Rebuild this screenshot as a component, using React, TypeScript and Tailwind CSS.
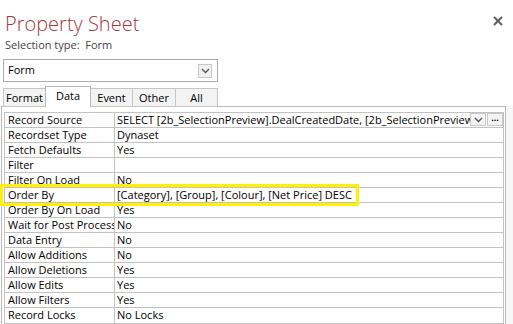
import React from 'react'

// Property Sheet pane (Access), Data tab
const rows: [string, string][] = [
  ['Record Source', 'SELECT [2b_SelectionPreview].DealCreatedDate, [2b_SelectionPreview].Category, [2b_SelectionPreview].Group'],
  ['Recordset Type', 'Dynaset'],
  ['Fetch Defaults', 'Yes'],
  ['Filter', ''],
  ['Filter On Load', 'No'],
  ['Order By', '[Category], [Group], [Colour], [Net Price] DESC'],
  ['Order By On Load', 'Yes'],
  ['Wait for Post Processing', 'No'],
  ['Data Entry', 'No'],
  ['Allow Additions', 'No'],
  ['Allow Deletions', 'Yes'],
  ['Allow Edits', 'Yes'],
  ['Allow Filters', 'Yes'],
  ['Record Locks', 'No Locks'],
]

const tabs = ['Format', 'Data', 'Event', 'Other', 'All']
const tabWidths = ['w-[42px]', 'w-[46px]', 'w-[42px]', 'w-[43px]', 'w-[42px]']

function Chevron() {
  return (
    <svg width="9" height="6" viewBox="0 0 9 6">
      <path d="M1 1 L4.5 4.5 L8 1" fill="none" stroke="#555" strokeWidth="1.4" />
    </svg>
  )
}

export default function App() {
  return (
    <div className="relative h-[324px] w-[513px] overflow-hidden bg-white font-['Open_Sans',sans-serif] text-[11px] text-black">
      {/* Titre + fermer */}
      <div className="flex items-start justify-between pt-[10px] pl-[5px] pr-[10px]">
        <h1 className="text-[20px] font-light leading-[28px] text-[#a4373a]">Property Sheet</h1>
        <svg width="10" height="10" viewBox="0 0 10 10" className="mt-[6px]">
          <path d="M1 1 L9 9 M9 1 L1 9" stroke="#5f5f5f" strokeWidth="2" />
        </svg>
      </div>
      <div className="pl-[5px] leading-[14px] text-[#444]">Selection type:&nbsp; Form</div>

      {/* Sélecteur d'objet */}
      <div className="ml-[3px] mt-[7px] flex h-[23px] w-[215px] items-center justify-between border border-[#ababab] pl-[4px] pr-[5px]">
        <span>Form</span>
        <span className="flex h-[14px] w-[14px] items-center justify-center border border-[#c8c8c8] bg-[#f0f0f0]">
          <Chevron />
        </span>
      </div>

      {/* Onglets */}
      <div className="relative z-10 -mb-px ml-[3px] mt-[4px] flex h-[21px] items-end">
        {tabs.map((t, i) =>
          t === 'Data' ? (
            <div
              key={t}
              className={`${tabWidths[i]} flex h-[21px] justify-center whitespace-nowrap border-x border-t border-[#b9b9b9] bg-white pt-[2px] leading-[14px]`}
            >
              {t}
            </div>
          ) : (
            <div
              key={t}
              className={`${tabWidths[i]} flex h-[19px] justify-center whitespace-nowrap border border-[#c6c6c6] bg-[#f3f3f3] pt-[2px] leading-[14px] ${i > 1 ? 'border-l-0' : ''} ${i === 0 ? 'border-r-0' : ''}`}
            >
              {t}
            </div>
          )
        )}
      </div>

      {/* Panneau + grille */}
      <div className="flex">
        <div className="ml-px w-[505px] border-x border-t border-[#b9b9b9] pl-[2px] pr-px pt-[5px]">
          <div className="border border-[#c2c2c2]">
            {rows.map(([k, v], i) => (
              <div key={k} className={`flex h-[15px] ${i < rows.length - 1 ? 'border-b' : ''} border-[#c2c2c2]`}>
                <div className="w-[110px] shrink-0 overflow-hidden whitespace-nowrap border-r border-[#c2c2c2] pl-[3px] leading-[14px]">
                  {k}
                </div>
                <div className="flex min-w-0 flex-1 items-start">
                  <div className="min-w-0 flex-1 overflow-hidden whitespace-nowrap pl-[2px] leading-[14px]">{v}</div>
                  {i === 0 && (
                    <div className="flex">
                      <span className="flex h-[13px] w-[16px] items-center justify-center border border-[#c8c8c8] bg-[#f3f3f3]">
                        <Chevron />
                      </span>
                      <span className="ml-px flex h-[13px] w-[16px] items-center justify-center border border-[#c8c8c8] bg-[#f3f3f3] text-[9px] font-bold leading-none">
                        ···
                      </span>
                    </div>
                  )}
                </div>
              </div>
            ))}
          </div>
        </div>
        <div className="w-[7px] bg-[#f7f7f7]" />
      </div>

      {/* Surlignage jaune */}
      <div className="absolute left-0 top-[184px] h-[22px] w-[359px] border-[3px] border-[#fff200]" />
    </div>
  )
}
